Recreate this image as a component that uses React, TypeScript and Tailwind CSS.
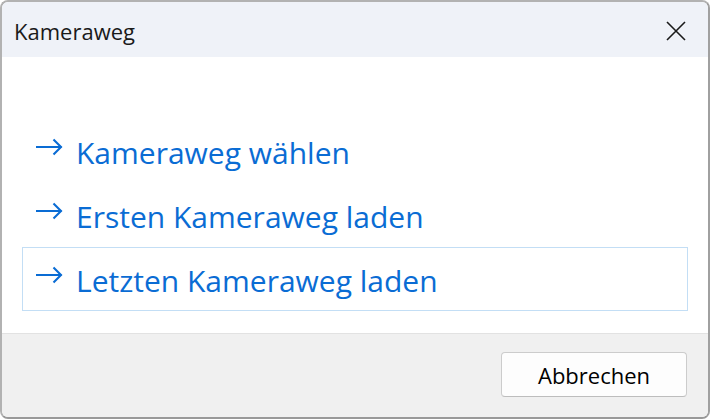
import React from "react";

function Arrow() {
  return (
    <svg width="28" height="18" viewBox="0 0 28 18" fill="none" className="shrink-0">
      <path d="M1 9H26.5" stroke="#0a6cd4" strokeWidth="2.1" />
      <path d="M18.5 1.5L26 9L18.5 16.5" stroke="#0a6cd4" strokeWidth="2.1" fill="none" />
    </svg>
  );
}

function Row({ label, focused }: { label: string; focused?: boolean }) {
  return (
    <div
      className={
        "h-[64px] flex items-center pl-[12px] gap-[13px] border " +
        (focused ? "border-[#c3def5]" : "border-transparent")
      }
    >
      <div className="-mt-[9px]">
        <Arrow />
      </div>
      <span className="text-[30px] text-[#0a6cd4] leading-none mt-[4px]">{label}</span>
    </div>
  );
}

export default function App() {
  return (
    <div
      className="w-[710px] h-[419px] bg-white"
      style={{ fontFamily: '"Open Sans", "Noto Sans", sans-serif' }}
    >
      <div className="w-full h-full rounded-[8px] border-2 border-[#b2b2b2] border-r-[#a0a0a0] border-b-[#999999] overflow-hidden flex flex-col">
        <div className="h-[55px] bg-[#eff2f8] flex items-center justify-between pl-[12px] pr-[22px] shrink-0">
          <span className="text-[22px] text-[#1a1a1a] mt-[3px]">Kameraweg</span>
          <svg width="20" height="20" viewBox="0 0 20 20" className="mt-[2px]">
            <path d="M1 1L19 19M19 1L1 19" stroke="#1a1a1a" strokeWidth="1.6" />
          </svg>
        </div>
        <div className="flex-1 bg-white pt-[62px] px-[20px] flex flex-col">
          <Row label="Kameraweg wählen" />
          <Row label="Ersten Kameraweg laden" />
          <Row label="Letzten Kameraweg laden" focused />
        </div>
        <div className="h-[84px] shrink-0 bg-[#f0f0f0] border-t border-[#e2e2e2] flex justify-end pt-[18px] pr-[21px]">
          <button className="w-[186px] h-[45px] rounded-[4px] border border-[#cccccc] border-b-[#bdbdbd] bg-[#fdfdfd] text-[22px] text-black leading-none">
            Abbrechen
          </button>
        </div>
      </div>
    </div>
  );
}
